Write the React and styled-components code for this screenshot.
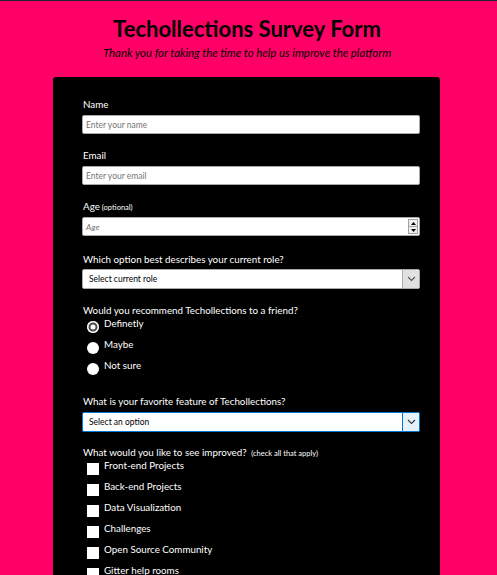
import React from "react";
import styled, { createGlobalStyle } from "styled-components";

const Global = createGlobalStyle`
  html { scrollbar-width: none; }
  html::-webkit-scrollbar { display: none; }
  body {
    margin: 0;
    background: #ff0066;
    font-family: "Comic Sans MS", "Lato", "Noto Sans", sans-serif;
    border-top: 1px solid #1e2535;
  }
`;

const Page = styled.div`
  display: flex;
  flex-direction: column;
  align-items: center;
  padding-bottom: 40px;
`;

const Header = styled.header`
  text-align: center;
  padding-top: 15px;
  margin-bottom: 17px;
  margin-right: 3px;
`;

const Title = styled.h1`
  margin: 0;
  font-size: 22px;
  line-height: 26px;
  font-weight: 700;
  color: #000;
`;

const Subtitle = styled.p`
  margin: 4px 0 0;
  font-size: 11.4px;
  line-height: 14px;
  font-style: italic;
  color: #000;
`;

const Card = styled.form`
  width: 387px;
  box-sizing: border-box;
  margin-right: 4px;
  background: #000;
  border-radius: 3px;
  padding: 21px 20px 30px 30px;
  color: #fff;
`;

const Group = styled.div`
  margin-bottom: ${(p) => p.$mb ?? 15}px;
`;

const Label = styled.div`
  font-size: 9.8px;
  line-height: 12px;
  height: 12px;
  margin-bottom: ${(p) => p.$mb ?? 5}px;
  color: #fff;
  white-space: nowrap;
`;

const Small = styled.span`
  font-size: 7.5px;
  line-height: 1;
  margin-left: 2px;
`;

const Field = styled.div`
  display: flex;
  align-items: stretch;
  height: ${(p) => p.$h ?? 19}px;
  box-sizing: border-box;
  background: #fff;
  border: 1px solid ${(p) => (p.$focus ? "#0078d7" : "#a9a9a9")};
  border-radius: 2px;
  margin-left: -1px;
`;

const Text = styled.span`
  flex: 1;
  display: flex;
  align-items: center;
  padding-left: ${(p) => p.$pl ?? 3}px;
  font-size: 8.5px;
  color: ${(p) => p.$color ?? "#757575"};
  font-style: ${(p) => (p.$italic ? "italic" : "normal")};
`;

const Spinner = styled.div`
  display: flex;
  flex-direction: column;
  width: 8px;
  margin: 1px 1px 1px 0;
  border: 1px solid #a0a0a0;
`;

const SpinBtn = styled.div`
  flex: 1;
  display: flex;
  align-items: center;
  justify-content: center;
  background: #f0f0f0;
  & + & {
    border-top: 1px solid #a0a0a0;
  }
`;

const ArrowBox = styled.div`
  width: 16px;
  display: flex;
  align-items: center;
  justify-content: center;
  background: ${(p) => (p.$focus ? "#e5f1fb" : "#e1e1e1")};
  border-left: 1px solid ${(p) => (p.$focus ? "#0078d7" : "#adadad")};
`;

const Option = styled.div`
  display: flex;
  align-items: flex-start;
  height: 21px;
  padding-left: 4px;
`;

const Radio = styled.span`
  width: 12px;
  height: 12px;
  margin-top: 3px;
  border-radius: 50%;
  background: #fff;
  box-shadow: ${(p) =>
    p.$checked ? "inset 0 0 0 1.5px #fff, inset 0 0 0 3.5px #4a4a4a" : "none"};
  flex: none;
`;

const Check = styled.span`
  width: 12px;
  height: 12px;
  margin-top: 3px;
  background: #fff;
  flex: none;
`;

const OptText = styled.span`
  margin-left: 5px;
  font-size: 9.8px;
  line-height: 11px;
`;

const Chevron = ({ color = "#555" }) => (
  <svg width="9" height="6" viewBox="0 0 9 6">
    <path d="M1 1l3.5 3.5L8 1" fill="none" stroke={color} strokeWidth="1.1" />
  </svg>
);

const Tri = ({ up }) => (
  <svg width="5" height="3" viewBox="0 0 5 3">
    <path d={up ? "M0 3L2.5 0L5 3Z" : "M0 0L2.5 3L5 0Z"} fill="#000" />
  </svg>
);

const improvements = [
  "Front-end Projects",
  "Back-end Projects",
  "Data Visualization",
  "Challenges",
  "Open Source Community",
  "Gitter help rooms",
  "Videos",
  "City Meetups",
  "Wiki",
  "Forum",
];

export default function App() {
  return (
    <Page>
      <Global />
      <Header>
        <Title>Techollections Survey Form</Title>
        <Subtitle>Thank you for taking the time to help us improve the platform</Subtitle>
      </Header>
      <Card>
        <Group>
          <Label>Name</Label>
          <Field>
            <Text>Enter your name</Text>
          </Field>
        </Group>
        <Group>
          <Label>Email</Label>
          <Field>
            <Text>Enter your email</Text>
          </Field>
        </Group>
        <Group $mb={17}>
          <Label>
            Age<Small>(optional)</Small>
          </Label>
          <Field>
            <Text $italic>Age</Text>
            <Spinner>
              <SpinBtn>
                <Tri up />
              </SpinBtn>
              <SpinBtn>
                <Tri />
              </SpinBtn>
            </Spinner>
          </Field>
        </Group>
        <Group>
          <Label $mb={4}>Which option best describes your current role?</Label>
          <Field $h={20}>
            <Text $color="#000" $pl={6}>Select current role</Text>
            <ArrowBox>
              <Chevron />
            </ArrowBox>
          </Field>
        </Group>
        <Group $mb={14}>
          <Label $mb={2}>Would you recommend Techollections to a friend?</Label>
          <Option>
            <Radio $checked />
            <OptText>Definetly</OptText>
          </Option>
          <Option>
            <Radio />
            <OptText>Maybe</OptText>
          </Option>
          <Option>
            <Radio />
            <OptText>Not sure</OptText>
          </Option>
        </Group>
        <Group $mb={14}>
          <Label $mb={5}>What is your favorite feature of Techollections?</Label>
          <Field $focus $h={20}>
            <Text $color="#000" $pl={6}>Select an option</Text>
            <ArrowBox $focus>
              <Chevron color="#333" />
            </ArrowBox>
          </Field>
        </Group>
        <Group>
          <Label $mb={2}>
            What would you like to see improved? <Small>(check all that apply)</Small>
          </Label>
          {improvements.map((t) => (
            <Option key={t}>
              <Check />
              <OptText>{t}</OptText>
            </Option>
          ))}
        </Group>
      </Card>
    </Page>
  );
}
